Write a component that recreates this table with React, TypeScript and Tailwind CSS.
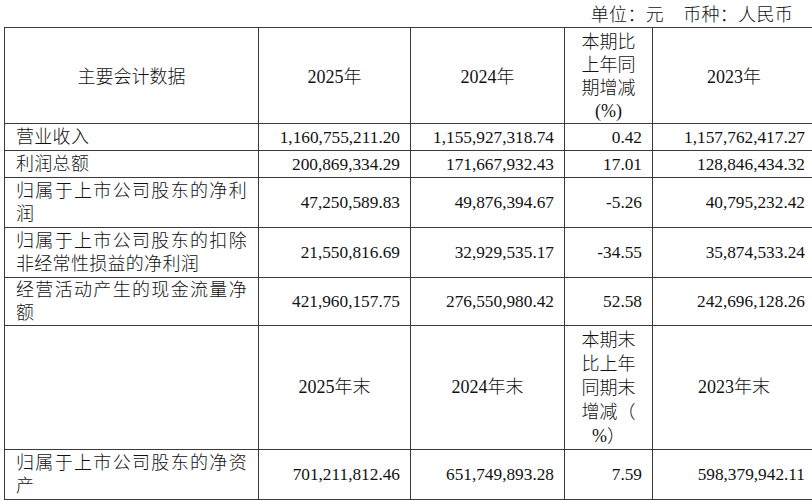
const rows1 = [
  { label: "营业收入", a: "1,160,755,211.20", b: "1,155,927,318.74", c: "0.42", d: "1,157,762,417.27", h: "h-[27px]" },
  { label: "利润总额", a: "200,869,334.29", b: "171,667,932.43", c: "17.01", d: "128,846,434.32", h: "h-[27px]" },
  { label: "归属于上市公司股东的净利润", a: "47,250,589.83", b: "49,876,394.67", c: "-5.26", d: "40,795,232.42", h: "h-[50px]" },
  { label: "归属于上市公司股东的扣除非经常性损益的净利润", a: "21,550,816.69", b: "32,929,535.17", c: "-34.55", d: "35,874,533.24", h: "h-[50px]" },
  { label: "经营活动产生的现金流量净额", a: "421,960,157.75", b: "276,550,980.42", c: "52.58", d: "242,696,128.26", h: "h-[48px]" },
];

const cell = "border border-[#3a3a3a] align-middle p-0";
const num = "text-right pr-[10px] text-[17.3px]";
const label = "text-justify pl-[11px] pr-[11px] tracking-[0.3px]";

function NumRow({ r }: { r: (typeof rows1)[number] }) {
  return (
    <tr>
      <td className={`${cell} ${label} ${r.h}`}>{r.label}</td>
      <td className={`${cell} ${num}`}>{r.a}</td>
      <td className={`${cell} ${num}`}>{r.b}</td>
      <td className={`${cell} ${num}`}>{r.c}</td>
      <td className={`${cell} ${num}`}>{r.d}</td>
    </tr>
  );
}

export default function App() {
  return (
    <div
      className="w-[812px] h-[500px] overflow-hidden bg-white text-[#111] text-[18px] leading-[23px] font-light"
      style={{ fontFamily: '"Liberation Serif", "Noto Sans CJK SC", serif' }}
    >
      <div className="h-[27px] flex items-end justify-end pr-[19px]">
        <span className="tracking-[0.3px]">单位：元&nbsp;&nbsp;&nbsp;&nbsp;币种：人民币</span>
      </div>
      <div className="pl-[4px]">
        <table className="table-fixed border-collapse w-[811px] border border-[#3a3a3a]">
          <colgroup>
            <col className="w-[254px]" />
            <col className="w-[152px]" />
            <col className="w-[154px]" />
            <col className="w-[88px]" />
            <col className="w-[163px]" />
          </colgroup>
          <tbody>
            <tr>
              <td className={`${cell} h-[95px] text-center pt-[3px]`}>主要会计数据</td>
              <td className={`${cell} text-center pt-[3px]`}>2025年</td>
              <td className={`${cell} text-center pt-[3px]`}>2024年</td>
              <td className={`${cell} text-center pt-[3px]`}>
                本期比
                <br />
                上年同
                <br />
                期增减
                <br />
                (%)
              </td>
              <td className={`${cell} text-center pt-[3px]`}>2023年</td>
            </tr>
            {rows1.map((r) => (
              <NumRow key={r.label} r={r} />
            ))}
            <tr>
              <td className={`${cell} h-[124px]`}></td>
              <td className={`${cell} text-center`}>2025年末</td>
              <td className={`${cell} text-center`}>2024年末</td>
              <td className={`${cell} text-center leading-[24px]`}>
                本期末
                <br />
                比上年
                <br />
                同期末
                <br />
                增减（
                <br />
                %）
              </td>
              <td className={`${cell} text-center`}>2023年末</td>
            </tr>
            <tr>
              <td className={`${cell} ${label} h-[50px]`}>归属于上市公司股东的净资产</td>
              <td className={`${cell} ${num}`}>701,211,812.46</td>
              <td className={`${cell} ${num}`}>651,749,893.28</td>
              <td className={`${cell} ${num}`}>7.59</td>
              <td className={`${cell} ${num}`}>598,379,942.11</td>
            </tr>
          </tbody>
        </table>
      </div>
    </div>
  );
}
